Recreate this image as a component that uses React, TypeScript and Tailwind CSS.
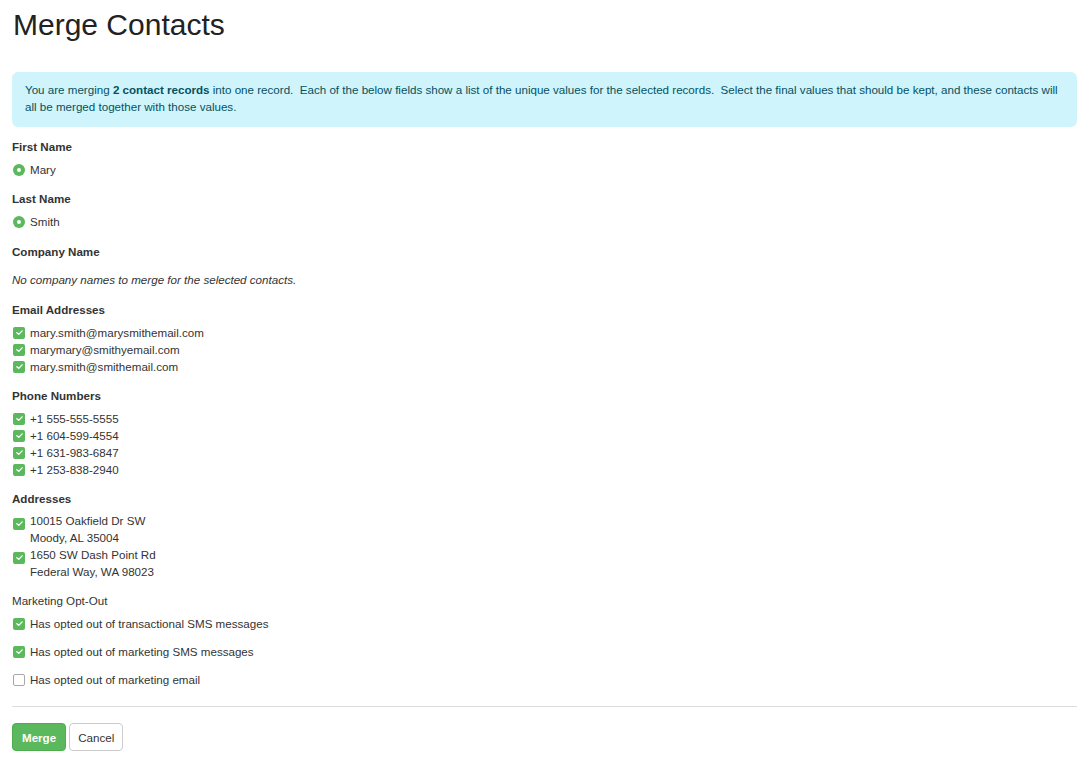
import React from "react";

const emails = [
  "mary.smith@marysmithemail.com",
  "marymary@smithyemail.com",
  "mary.smith@smithemail.com",
];

const phones = ["+1 555-555-5555", "+1 604-599-4554", "+1 631-983-6847", "+1 253-838-2940"];

const addresses = [
  ["10015 Oakfield Dr SW", "Moody, AL 35004"],
  ["1650 SW Dash Point Rd", "Federal Way, WA 98023"],
];

const optOuts = [
  { label: "Has opted out of transactional SMS messages", checked: true },
  { label: "Has opted out of marketing SMS messages", checked: true },
  { label: "Has opted out of marketing email", checked: false },
];

const Check = ({ checked = true }: { checked?: boolean }) =>
  checked ? (
    <span className="inline-flex items-center justify-center w-3 h-3 rounded-[2px] bg-[#5cb85c] shrink-0">
      <svg viewBox="0 0 12 12" className="w-[9px] h-[9px]">
        <path d="M2.5 6.2 L5 8.5 L9.5 3.8" fill="none" stroke="#fff" strokeWidth="1.8" strokeLinecap="round" strokeLinejoin="round" />
      </svg>
    </span>
  ) : (
    <span className="inline-block w-3 h-3 rounded-[2px] border border-[#a8a8a8] bg-white shrink-0" />
  );

const Radio = () => (
  <span className="inline-flex items-center justify-center w-3 h-3 rounded-full bg-[#5cb85c] shrink-0">
    <span className="w-1 h-1 rounded-full bg-white" />
  </span>
);

const Label = ({ children }: { children: React.ReactNode }) => (
  <div className="font-bold mb-[6px]">{children}</div>
);

export default function App() {
  return (
    <div
      className="bg-white min-h-[759px] pl-3 pr-[3px] text-[11.6px] leading-[17px] text-[#333]"
      style={{ fontFamily: '"Liberation Sans", Arial, sans-serif' }}
    >
      <h1 className="text-[30px] leading-[33px] text-[#222] pt-[8px] pl-px">Merge Contacts</h1>

      {/* info banner */}
      <div className="mt-[31px] rounded-[6px] bg-[#cff4fc] text-[#055160] pt-[9px] pb-[12px] pl-[13px] pr-[8px]">
        You are merging <b>2 contact records</b> into one record.&nbsp; Each of the below fields show a list of
        the unique values for the selected records.&nbsp; Select the final values that should be kept, and these
        contacts will all be merged together with those values.
      </div>

      <div className="mt-[11px] flex flex-col">
        <div>
          <Label>First Name</Label>
          <div className="flex items-center gap-[5px] pl-px">
            <Radio />
            <span>Mary</span>
          </div>
        </div>

        <div className="mt-3">
          <Label>Last Name</Label>
          <div className="flex items-center gap-[5px] pl-px">
            <Radio />
            <span>Smith</span>
          </div>
        </div>

        <div className="mt-[13px]">
          <div className="font-bold">Company Name</div>
          <p className="italic mt-[11px]">No company names to merge for the selected contacts.</p>
        </div>

        <div className="mt-[13px]">
          <Label>Email Addresses</Label>
          {emails.map((e) => (
            <div key={e} className="flex items-center gap-[5px] pl-px">
              <Check />
              <span>{e}</span>
            </div>
          ))}
        </div>

        <div className="mt-3">
          <Label>Phone Numbers</Label>
          {phones.map((p) => (
            <div key={p} className="flex items-center gap-[5px] pl-px">
              <Check />
              <span>{p}</span>
            </div>
          ))}
        </div>

        <div className="mt-3">
          <div className="font-bold mb-[5px]">Addresses</div>
          {addresses.map((a) => (
            <div key={a[0]} className="flex items-start gap-[5px] pl-px">
              <span className="pt-[3px]">
                <Check />
              </span>
              <span>
                {a[0]}
                <br />
                {a[1]}
              </span>
            </div>
          ))}
        </div>

        <div className="mt-3">
          <div className="mb-[6px]">Marketing Opt-Out</div>
          <div className="flex flex-col gap-[11px]">
            {optOuts.map((o) => (
              <label key={o.label} className="flex items-center gap-[5px] pl-px">
                <Check checked={o.checked} />
                <span>{o.label}</span>
              </label>
            ))}
          </div>
        </div>
      </div>

      <hr className="mt-[18px] border-0 border-t border-[#ddd]" />

      <div className="mt-4 flex gap-[3px]">
        <button className="h-7 px-[9px] rounded-[4px] bg-[#5cb85c] border border-[#4cae4c] text-white font-bold">
          Merge
        </button>
        <button className="h-7 px-[8px] rounded-[4px] bg-white border border-[#ccc] text-[#333]">Cancel</button>
      </div>
    </div>
  );
}
